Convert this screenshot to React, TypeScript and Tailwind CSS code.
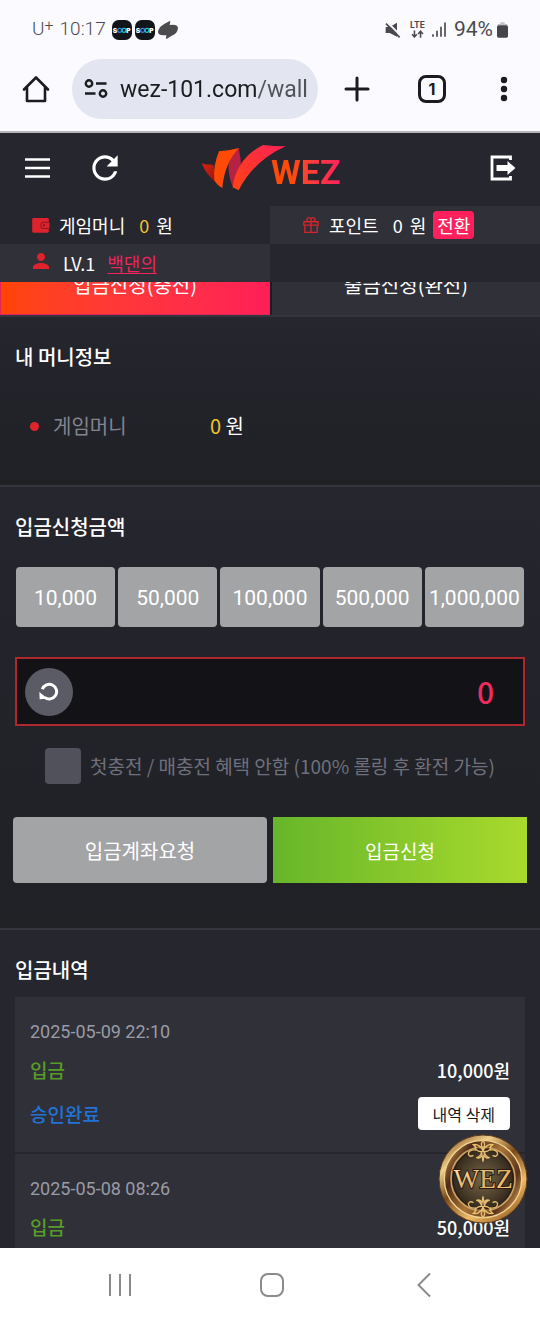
import React from "react";
import { MdRefresh, MdPerson } from "react-icons/md";
import { AiOutlineGift } from "react-icons/ai";

const KR = "font-['Noto_Sans_CJK_KR',sans-serif]";
const RB = "font-['Roboto',sans-serif]";

function SoopIcon() {
  return (
    <svg viewBox="0 0 60 60" className="size-5" role="img" aria-label="SOOP">
      <rect width="60" height="60" rx="20" fill="#12161b" />
      <text x="2" y="38" fontFamily="Inter, sans-serif" fontWeight="900" fontSize="20" fill="#fff">S</text>
      <circle cx="23" cy="31" r="6" fill="none" stroke="#2f7ff0" strokeWidth="4" />
      <circle cx="36" cy="31" r="6" fill="none" stroke="#19c4c9" strokeWidth="4" />
      <text x="43" y="38" fontFamily="Inter, sans-serif" fontWeight="900" fontSize="20" fill="#fff">P</text>
    </svg>
  );
}

function StatusBar() {
  return (
    <div className={`${RB} flex h-[59px] items-center px-8 text-[#4a4a4e]`}>
      <div className="flex items-center text-[19px] font-light">
        <span>U</span>
        <span className="-mt-2 mr-1.5 text-base">+</span>
        <span className="mr-1.5">10:17</span>
        <span className="flex items-center gap-[3px]">
          <SoopIcon />
          <SoopIcon />
          <svg viewBox="0 0 60 56" className="h-5 w-5" fill="#4b4b4d">
            <path d="M37 0 35 13Q58 9 60 22 58 40 41 45L24 56 25 43Q2 47 0 34 2 18 20 9Z" />
          </svg>
        </span>
      </div>
      <div className="ml-auto flex items-center">
        <svg viewBox="0 0 48 48" className="mr-2 size-4" fill="#4a4a4e">
          <path d="M2 15h12L36 2v42L14 33H2z" />
          <path d="M8 2 50 44" stroke="#fafaff" strokeWidth="6" />
          <path d="M3 5 44 46" stroke="#4a4a4e" strokeWidth="5" />
        </svg>
        <svg viewBox="0 0 50 50" className="mr-1.5 size-[17px]" fill="none" role="img" aria-label="LTE">
          <text x="25" y="21" textAnchor="middle" fontFamily="Inter, sans-serif" fontWeight="700" fontSize="25" fill="#4a4a4e">LTE</text>
          <path d="M16 28v18M9 39l7 8 7-8M34 49V30M27 38l7-8 7 8" stroke="#4a4a4e" strokeWidth="4.5" />
        </svg>
        <svg viewBox="0 0 42 44" className="mr-2 h-[15px] w-3.5" stroke="#4a4a4e" strokeWidth="5">
          <path d="M3 36v8M15 26v18M27 14v30M39 1v43" />
        </svg>
        <span className="mr-1 text-[21px] font-normal">94%</span>
        <svg viewBox="0 0 33 46" className="h-4 w-[11px]">
          <path d="M10 0h13v5h6q3 0 3 4H1q0-4 3-4h6z" fill="#c2c2c6" />
          <rect y="9" width="33" height="37" rx="5" fill="#464648" />
        </svg>
      </div>
    </div>
  );
}

function BrowserBar() {
  return (
    <div className="flex h-[74px] items-start border-b-2 border-[#b4b4ba] pr-8 pl-[22px]">
      <div className="flex h-[60px] w-full items-center">
        <button aria-label="홈" className="mr-[22px] shrink-0">
          <svg viewBox="0 0 28 28" className="size-7" fill="none" stroke="#1b1b20" strokeWidth="2.6" strokeLinejoin="round" strokeLinecap="round">
            <path d="M2 14.5 14 2.5 26 14.5M5 12v14h18V12" />
          </svg>
        </button>
        <label className="flex h-full flex-1 items-center rounded-full bg-[#e3e6f0] pr-2.5 pl-3">
          <svg viewBox="0 0 24 20" className="mr-3 h-5 w-6 shrink-0" fill="none" stroke="#1b1b20" strokeWidth="2.4">
            <circle cx="5" cy="4.5" r="3.2" />
            <path d="M12 4.5h10.5M1 14.5h10.5" />
            <circle cx="19" cy="14.5" r="3.2" />
          </svg>
          <input
            aria-label="주소"
            readOnly
            value="wez-101.com/wall"
            className={`${RB} h-10 w-0 flex-1 bg-linear-to-r from-[#1b1b20] from-73% to-[#50525a] to-73% bg-clip-text text-[23px] text-transparent outline-none`}
          />
        </label>
        <button aria-label="새 탭" className="ml-[26px] shrink-0">
          <svg viewBox="0 0 26 26" className="size-[26px]" stroke="#1b1b20" strokeWidth="3" strokeLinecap="round">
            <path d="M13 2v22M2 13h22" />
          </svg>
        </button>
        <button className="ml-12 flex size-7 shrink-0 items-center justify-center rounded-lg border-3 border-[#1b1b20] font-['Inter',sans-serif] text-base font-bold text-[#1b1b20]">1</button>
        <button aria-label="더보기" className="ml-[54px] shrink-0">
          <svg viewBox="0 0 8 26" className="h-[26px] w-2" fill="#1b1b20">
            <circle cx="4" cy="4" r="3.2" />
            <circle cx="4" cy="13" r="3.2" />
            <circle cx="4" cy="22" r="3.2" />
          </svg>
        </button>
      </div>
    </div>
  );
}

function Logo() {
  return (
    <a href="#" aria-label="WEZ" className="flex items-center">
      <svg viewBox="34 36 258 144" className="h-12 w-[86px]">
        <defs>
          <linearGradient id="swoosh" x1="0" y1="1" x2="1" y2="0">
            <stop offset="0" stopColor="#ff4412" />
            <stop offset="1" stopColor="#ff2156" />
          </linearGradient>
          <linearGradient id="leaf" x1="0" y1="0" x2="1" y2="1">
            <stop offset="0" stopColor="#e3200c" />
            <stop offset="1" stopColor="#8c1712" />
          </linearGradient>
        </defs>
        <path d="M36 93Q48 99 62 97L72 100 80 152Q50 130 36 93Z" fill="url(#leaf)" />
        <path d="M148 48 150 66Q158 90 148 125L131 168Q114 130 117 95 126 65 148 48Z" fill="#b52243" />
        <path d="M88 58Q118 56 148 48 104 95 98 168 84 162 74 145 70 100 88 58Z" fill="#ff4a08" />
        <path d="M220 39Q250 43 288 43 192 86 147 175L129 166Q140 80 220 39Z" fill="url(#swoosh)" />
      </svg>
      <span className={`${RB} -ml-4 bg-linear-to-r from-[#ff4a08] from-30% to-[#ff1f5b] bg-clip-text pt-2 text-[34px] leading-9 font-bold text-transparent`}>WEZ</span>
    </a>
  );
}

function SiteHeader() {
  return (
    <header className="flex h-[73px] items-start px-6">
      <div className="flex h-[69px] w-full items-center">
        <button aria-label="메뉴">
          <svg viewBox="0 0 26 22" className="h-[22px] w-[26px]" stroke="#fff" strokeWidth="2.6">
            <path d="M1 2.5h25M1 11h25M1 19.5h25" />
          </svg>
        </button>
        <button aria-label="새로고침" className="ml-9 text-white">
          <MdRefresh className="size-[38px]" />
        </button>
        <div className="ml-[77px]">
          <Logo />
        </div>
        <button aria-label="로그아웃" className="ml-auto">
          <svg viewBox="0 0 26 26" className="size-[26px]">
            <path d="M20.5 5V2H2v22h18.5v-3" fill="none" stroke="#fff" strokeWidth="2.8" />
            <path d="M6.5 10h11V6l8 7-8 7v-4h-11z" fill="#fff" />
          </svg>
        </button>
      </div>
    </header>
  );
}

function WalletIcon() {
  return (
    <svg viewBox="0 0 54 46" className="mr-[9px] h-[15px] w-[18px] shrink-0">
      <rect width="51" height="45" rx="4" fill="#df232c" />
      <path d="M54 13H33q-6 0-6 6v7q0 6 6 6h21z" fill="#df232c" stroke="#6d1a22" strokeWidth="2.5" />
      <circle cx="36" cy="22.5" r="3" fill="#6d1a22" />
    </svg>
  );
}

function AccountInfo() {
  return (
    <div className="grid grid-cols-2 text-lg leading-6 text-white">
      <div className="flex h-[38px] items-center pl-8">
        <WalletIcon />
        <span>게임머니</span>
        <span className="ml-3.5 text-[#f2c230]">0</span>
        <span className="ml-[7px]">원</span>
      </div>
      <div className="flex h-[38px] items-center bg-[#2f3038] pl-[31px]">
        <AiOutlineGift className="mr-2 size-5 shrink-0 text-[#d8232c]" />
        <span>포인트</span>
        <span className="ml-3.5">0</span>
        <span className="ml-[7px]">원</span>
        <button className="ml-[7px] h-7 rounded-sm bg-[#ff1f5b] px-1">전환</button>
      </div>
      <div className="flex h-[38px] items-center bg-[#2f3038] pl-[29px]">
        <MdPerson className="mr-2.5 mb-1 size-6 shrink-0 text-[#df232c]" />
        <span>LV.1</span>
        <a href="#" className="ml-3 text-[#f0245c] underline underline-offset-2">백댄의</a>
      </div>
    </div>
  );
}

function Tabs() {
  return (
    <div className="flex h-[35px] items-end gap-0.5 overflow-hidden border-b-2 border-[#35363d] bg-[#1c1d22] text-xl text-white">
      <button className="h-[60px] flex-1 shrink-0 border border-[#e0245e] bg-linear-to-r from-[#ff4400] to-[#ff1f57]">입금신청(충전)</button>
      <button className="h-[60px] flex-1 shrink-0 bg-[#2f3038]">출금신청(환전)</button>
    </div>
  );
}

const AMOUNTS = ["10,000", "50,000", "100,000", "500,000", "1,000,000"];

const HISTORY = [
  { date: "2025-05-09 22:10", amount: "10,000원" },
  { date: "2025-05-08 08:26", amount: "50,000원" },
];

function Section({ title, className, children }: { title: string; className: string; children: React.ReactNode }) {
  return (
    <section className={`px-[15px] ${className}`}>
      <h2 className="pt-6 text-xl leading-8 font-medium text-white">{title}</h2>
      {children}
    </section>
  );
}

function DepositForm() {
  return (
    <>
      <div className={`${RB} mt-6 grid grid-cols-5 gap-[3px] px-px text-[21px] text-white`}>
        {AMOUNTS.map((a) => (
          <button key={a} className="h-[60px] rounded-sm bg-[#a3a4a6] pt-1">{a}</button>
        ))}
      </div>
      <div className="mt-[30px] flex h-[69px] items-center border-2 border-[#ad272c] bg-[#131317] pr-[29px] pl-2">
        <button aria-label="초기화" className="flex size-12 shrink-0 items-center justify-center rounded-full bg-[#5b5b66]">
          <svg viewBox="0 0 60 60" className="size-5 text-white" fill="none">
            <path d="M10 22A22 22 0 1 1 17 46" stroke="currentColor" strokeWidth="9" />
            <path d="M1 30 2 52 26 50z" fill="currentColor" />
          </svg>
        </button>
        <input aria-label="입금신청금액" defaultValue="0" className="w-0 flex-1 bg-transparent text-right text-[30px] font-medium text-[#ee2b5d] outline-none" />
      </div>
      <label className="mt-[22px] flex items-center justify-center gap-[9px] text-[19px] leading-9 text-[#6f707c]">
        <input type="checkbox" className="size-9 shrink-0 appearance-none rounded-sm bg-[#50515b]" />
        <span className="whitespace-nowrap">첫충전 / 매충전 혜택 안함 (100% 롤링 후 환전 가능)</span>
      </label>
      <div className="-mx-0.5 mt-[33px] grid grid-cols-2 gap-1.5 text-white">
        <button className="h-[66px] rounded-sm bg-[#a3a4a6] pt-0.5 text-xl">입금계좌요청</button>
        <button className="h-[66px] bg-linear-to-r from-[#66b62a] to-[#a8da2c] pt-0.5 text-[19px]">입금신청</button>
      </div>
    </>
  );
}

function History() {
  return (
    <ul className="mt-[11px]">
      {HISTORY.map((h) => (
        <li key={h.date} className="border-b-2 border-[#25262e] bg-[#2f3038] px-[15px] pt-5 pb-[22px]">
          <div className={`${RB} text-lg leading-[30px] text-[#9a9ba5]`}>{h.date}</div>
          <div className="mt-[7px] flex items-center justify-between text-[19px] leading-8 font-medium">
            <span className="text-[#589c28]">입금</span>
            <span className="text-lg leading-8 text-white">{h.amount}</span>
          </div>
          <div className="mt-[11px] flex items-center justify-between text-[19px] leading-8 font-medium">
            <span className="text-[#2173d6]">승인완료</span>
            <button className="h-[33px] rounded-sm bg-white px-[15px] text-base font-normal text-[#18181b]">내역 삭제</button>
          </div>
        </li>
      ))}
    </ul>
  );
}

function Ornament() {
  return (
    <g fill="none" stroke="#e7bd72" strokeWidth="4" strokeLinecap="round">
      <path d="M135 20q-10 10 0 26 10-16 0-26M135 50q-12-22-29-18 8 5 7 14 12 10 22 6M135 50q12-22 29-18-8 5-7 14-12 10-22 6M113 48q-20-2-22 12 3 10 14 5M157 48q20-2 22 12-3 10-14 5M132 52q-5 17-17 19 12 4 17-8l3 20 3-20q5 12 17 8-12-2-17-19" />
      <path d="M116 36q5 8 12 8M154 36q-5 8-12 8" stroke="#8b5a22" />
    </g>
  );
}

function CoinButton() {
  return (
    <button aria-label="WEZ 메뉴" className="absolute right-3 bottom-6 size-[90px]">
      <svg viewBox="0 0 270 270" className="size-full">
        <defs>
          <linearGradient id="rim" x1="0.15" y1="0" x2="0.85" y2="1">
            <stop offset="0" stopColor="#8a5a24" />
            <stop offset="0.22" stopColor="#f0cf8a" />
            <stop offset="0.45" stopColor="#7b4a1c" />
            <stop offset="0.72" stopColor="#edbb68" />
            <stop offset="1" stopColor="#8a531b" />
          </linearGradient>
          <linearGradient id="ring" x1="0" y1="0.2" x2="1" y2="0.8">
            <stop offset="0" stopColor="#b98748" />
            <stop offset="0.2" stopColor="#4b2a16" />
            <stop offset="0.5" stopColor="#a87536" />
            <stop offset="0.8" stopColor="#5b321a" />
            <stop offset="1" stopColor="#d6a254" />
          </linearGradient>
          <radialGradient id="core">
            <stop offset="0" stopColor="#77664a" />
            <stop offset="0.65" stopColor="#4a3d2a" />
            <stop offset="1" stopColor="#2f241a" />
          </radialGradient>
          <linearGradient id="goldText" x1="0" y1="0" x2="1" y2="1">
            <stop offset="0" stopColor="#fff0bd" />
            <stop offset="0.5" stopColor="#e0b068" />
            <stop offset="1" stopColor="#f6cf83" />
          </linearGradient>
        </defs>
        <circle cx="135" cy="135" r="132" fill="url(#rim)" stroke="#5f3b17" strokeWidth="3" />
        <circle cx="135" cy="135" r="116" fill="url(#ring)" stroke="#f4d391" strokeWidth="4" />
        <circle cx="135" cy="135" r="96" fill="url(#core)" stroke="#c9a267" strokeWidth="5" />
        <circle cx="135" cy="135" r="90" fill="none" stroke="#2b1d12" strokeWidth="3" />
        <Ornament />
        <g transform="rotate(180 135 135)">
          <Ornament />
        </g>
        <text x="135" y="163" textAnchor="middle" fontFamily="Liberation Serif, serif" fontSize="82" fill="url(#goldText)" stroke="#2a180b" strokeWidth="6" paintOrder="stroke">WEZ</text>
      </svg>
    </button>
  );
}

function SystemNav() {
  return (
    <nav className="grid h-[72px] shrink-0 grid-cols-3 items-center bg-white pt-0.5">
      <button aria-label="최근 앱" className="justify-self-end pr-12">
        <svg viewBox="0 0 24 24" className="size-6" stroke="#8b8b8d" strokeWidth="2">
          <path d="M2 1v22M12 1v22M22 1v22" />
        </svg>
      </button>
      <button aria-label="홈 화면" className="justify-self-center pl-1">
        <svg viewBox="0 0 26 26" className="size-[26px]" fill="none" stroke="#8b8b8d" strokeWidth="2">
          <rect x="2" y="2" width="22" height="22" rx="7" />
        </svg>
      </button>
      <button aria-label="뒤로" className="justify-self-start pl-14">
        <svg viewBox="0 0 16 26" className="h-[26px] w-4" fill="none" stroke="#8b8b8d" strokeWidth="2">
          <path d="M14 1.5 2.5 13 14 24.5" />
        </svg>
      </button>
    </nav>
  );
}

export default function App() {
  return (
    <div className={`${KR} flex h-screen flex-col bg-[#fafaff]`}>
      <StatusBar />
      <BrowserBar />
      <div className="relative flex min-h-0 flex-1 flex-col bg-[#25262e]">
        <SiteHeader />
        <AccountInfo />
        <main className="min-h-0 flex-1 overflow-y-auto [scrollbar-width:none]">
          <Tabs />
          <Section title="내 머니정보" className="border-b-2 border-[#35363d] bg-linear-to-b from-[#25262e] to-[#202125] pb-[34px]">
            <dl className="mt-8 mb-1 flex items-center text-xl leading-[42px]">
              <dt className="flex w-[195px] items-center pl-[15px] text-[#83848f]">
                <span className="mr-3.5 size-[9px] rounded-full bg-[#e0242c]" />
                게임머니
              </dt>
              <dd className="text-white">
                <span className="text-[#f2c230]">0</span> 원
              </dd>
            </dl>
          </Section>
          <Section title="입금신청금액" className="border-b-2 border-[#35363d] bg-linear-to-b from-[#25262e] to-[#202125] pb-[45px]">
            <DepositForm />
          </Section>
          <Section title="입금내역" className="">
            <History />
          </Section>
        </main>
        <CoinButton />
      </div>
      <SystemNav />
    </div>
  );
}
